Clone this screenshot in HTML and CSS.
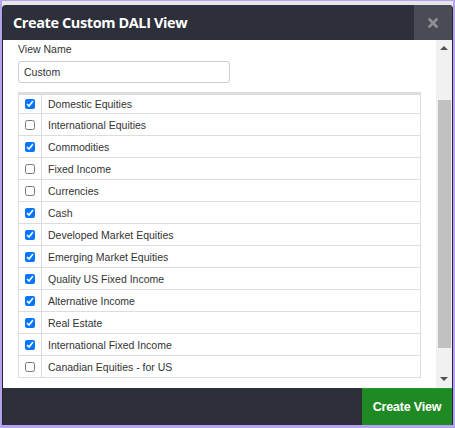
FILE: index.html
```
<!DOCTYPE html>
<html lang="en">
<head>
  <meta charset="UTF-8" />
  <title>Create Custom DALI View</title>
  <link rel="stylesheet" href="styles.css">
</head>
<body>
  <div class="frame">
    <div class="dialog">
      <div class="header">
        <h1 class="title">Create Custom DALI View</h1>
        <button class="close" type="button" aria-label="Close">
          <svg width="10" height="10" viewBox="0 0 10 10">
            <path d="M1.5 1.5 L8.5 8.5 M8.5 1.5 L1.5 8.5" stroke="#8f9096" stroke-width="2.6" stroke-linecap="square"/>
          </svg>
        </button>
      </div>

      <div class="body">
        <div class="content">
          <label class="field-label" for="viewName">View Name</label>
          <input class="field-input" id="viewName" type="text" value="Custom">

          <table class="assets">
            <tbody>
              <tr><td class="check"><input type="checkbox" checked></td><td>Domestic Equities</td></tr>
              <tr><td class="check"><input type="checkbox"></td><td>International Equities</td></tr>
              <tr><td class="check"><input type="checkbox" checked></td><td>Commodities</td></tr>
              <tr><td class="check"><input type="checkbox"></td><td>Fixed Income</td></tr>
              <tr><td class="check"><input type="checkbox"></td><td>Currencies</td></tr>
              <tr><td class="check"><input type="checkbox" checked></td><td>Cash</td></tr>
              <tr><td class="check"><input type="checkbox" checked></td><td>Developed Market Equities</td></tr>
              <tr><td class="check"><input type="checkbox" checked></td><td>Emerging Market Equities</td></tr>
              <tr><td class="check"><input type="checkbox" checked></td><td>Quality US Fixed Income</td></tr>
              <tr><td class="check"><input type="checkbox" checked></td><td>Alternative Income</td></tr>
              <tr><td class="check"><input type="checkbox" checked></td><td>Real Estate</td></tr>
              <tr><td class="check"><input type="checkbox" checked></td><td>International Fixed Income</td></tr>
              <tr><td class="check"><input type="checkbox"></td><td>Canadian Equities - for US</td></tr>
            </tbody>
          </table>
        </div>

        <div class="scrollbar">
          <span class="arrow up"></span>
          <div class="thumb"></div>
          <span class="arrow down"></span>
        </div>
      </div>

      <div class="footer">
        <button class="create" type="button">Create View</button>
      </div>
    </div>
  </div>
</body>
</html>
```

FILE: styles.css
```
* {
  margin: 0;
  padding: 0;
  box-sizing: border-box;
}

body {
  width: 455px;
  height: 428px;
  overflow: hidden;
  font-family: "Liberation Sans", Arial, sans-serif;
  background: #b6a4ee;
}

.frame {
  width: 455px;
  height: 428px;
  border-style: solid;
  border-color: #b6a4ee;
  border-width: 1px 2px 3px 2px;
  padding-top: 4px;
  background: #e6e6e8;
}

.dialog {
  height: 420px;
  display: flex;
  flex-direction: column;
  background: #2d2f3a;
  border-left: 1px solid #23252d;
  border-right: 1px solid #23252d;
  border-radius: 4px 4px 0 0;
  overflow: hidden;
}

/* Header */
.header {
  height: 35px;
  display: flex;
  align-items: stretch;
}

.title {
  flex: 1;
  display: flex;
  align-items: center;
  padding-left: 10px;
  color: #fff;
  font-family: "Open Sans", sans-serif;
  font-size: 14.5px;
  font-weight: 700;
  letter-spacing: -0.4px;
}

.close {
  width: 38px;
  border: none;
  background: #4a4c55;
  display: flex;
  align-items: center;
  justify-content: center;
}

/* Body */
.body {
  height: 348px;
  display: flex;
  background: #fff;
}

.content {
  flex: 1;
  padding: 3px 15px 0 15px;
}

.field-label {
  display: block;
  font-size: 10.5px;
  color: #333;
  line-height: 13px;
}

.field-input {
  display: block;
  margin-top: 5px;
  width: 212px;
  height: 22px;
  border: 1px solid #ccc;
  border-radius: 3px;
  padding: 0 5px;
  font-family: "Liberation Sans", Arial, sans-serif;
  font-size: 10.5px;
  color: #333;
}

.assets {
  margin-top: 9px;
  width: 403px;
  border-collapse: collapse;
  border-top: 3px solid #ddd;
}

.assets td {
  border: 1px solid #ddd;
  height: 22px;
  font-size: 10.5px;
  color: #333;
  padding: 0 6px;
  vertical-align: middle;
}

.assets tr:first-child td {
  border-top: none;
  height: 20px;
}

.assets td.check {
  width: 23px;
  padding: 0;
  text-align: center;
}

.assets input[type="checkbox"] {
  width: 10px;
  height: 10px;
  display: block;
  margin: 0 auto;
}

/* Fake scrollbar */
.scrollbar {
  width: 16px;
  background: #f1f1f1;
  display: flex;
  flex-direction: column;
  align-items: center;
}

.arrow {
  width: 0;
  height: 0;
  border-left: 4px solid transparent;
  border-right: 4px solid transparent;
}

.arrow.up {
  margin-top: 6px;
  border-bottom: 4px solid #505050;
}

.arrow.down {
  margin-top: 29px;
  border-top: 4px solid #505050;
}

.thumb {
  margin-top: 50px;
  width: 13px;
  height: 248px;
  background: #c1c1c1;
}

/* Footer */
.footer {
  flex: 1;
  display: flex;
  justify-content: flex-end;
  background: #2d2f3a;
}

.create {
  width: 90px;
  border: none;
  border-top: 1px solid #2a9a30;
  background: #1f8a24;
  color: #fff;
  font-family: "Liberation Sans", Arial, sans-serif;
  font-size: 12.5px;
  font-weight: 700;
  letter-spacing: -0.2px;
}
```
